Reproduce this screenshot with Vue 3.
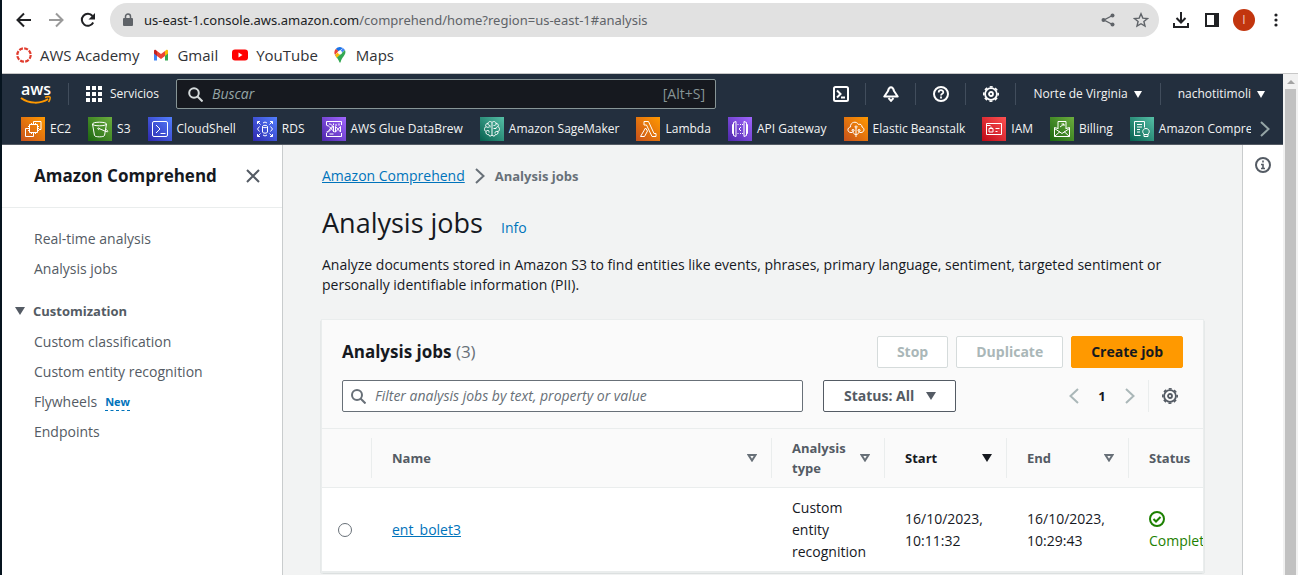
<script setup>
import { ref } from 'vue'

const services = [
  { name: 'EC2', tone: 'orange', d: 'M8.5 7.5h8v8h-8z M10.5 7.5V6M12.5 7.5V6M14.5 7.5V6M10.5 17v-1.5M12.5 17v-1.5M14.5 17v-1.5M8.5 9.5H7M8.5 11.5H7M8.5 13.5H7M18 9.5h-1.5M18 11.5h-1.5M18 13.5h-1.5 M12.5 6V4.5H20v8h-2 M7 11.5H4.5v8h8V17' },
  { name: 'S3', tone: 'green', d: 'M4.5 7c0-2.400 14-2.400 14 0s-14 2.400-14 0z M4.5 7l2 11.500c.5 1.800 9.500 1.800 10 0l2-11.500 M11 11.500l7 3c3 1 2-1-.5-2.500 M10.500 11a.7.7 0 1 0 .1 0' },
  { name: 'CloudShell', tone: 'blue', d: 'M6 4.5h12q1.5 0 1.5 1.5v12q0 1.5-1.5 1.5H6q-1.5 0-1.5-1.5V6q0-1.5 1.5-1.5z M8 8l4 4-4 4 M12.500 16.500h5' },
  { name: 'RDS', tone: 'blue', d: 'M9.500 9.500c0-1.600 5-1.600 5 0s-5 1.600-5 0v5.500c0 1.600 5 1.600 5 0V9.500 M6.500 9.500l-2 2.500 2 2.500 M17.500 9.500l2 2.500-2 2.500 M4.500 7V4.500H7M4.500 4.500l3 3 M17 4.500h2.500V7M19.500 4.500l-3 3 M4.500 17v2.500H7M4.500 19.500l3-3 M17 19.500h2.500V17M19.500 19.500l-3-3 M10 6l2-1 2 1M10 18l2 1 2-1' },
  { name: 'AWS Glue DataBrew', tone: 'purple', d: 'M4.5 8V4.5h15V8 M4.5 16v3.5h15V16 M4.5 8.500c3 0 3 2 5 3.500s2 3 4 3 M4.500 15c3 0 4-6 7-6v6 M7 7c3 0 4 2 3 4s-3 4-5 4 M14 7v2M17 6.500v2M11.500 6.500V8M7.500 17h4 M13.500 9.500l5 5.500v-5.500l-5 5.500z' },
  { name: 'Amazon SageMaker', tone: 'teal', d: 'M12 5.5c-2-2-4-.5-4 1-2 0-3 1.5-2 3-2 1.5-2 4 0 5-.5 2 1 3.500 2.500 3 .5 2 2.500 2 3.500.5V5.500c2-2 4-.5 4 1 2 0 3 1.500 2 3 2 1.500 2 4 0 5 .5 2-1 3.500-2.500 3-.5 2-2.500 2-3.500.5 M8 6.500c0 1.500 1 2 2 2v2 M6 9.500c1 1 2 1 3 .5 M6 14.500c1-1.500 3-1.500 3 0v1 M16 6.500c0 2-1 2-2.500 2 M18 9.500c-1 0-2 1-2 2h-2.500 M18 14.500c-2 0-3-.5-3 2' },
  { name: 'Lambda', tone: 'orange', d: 'M8 4.5h4.5l5.5 12h2v3h-4L10.500 8H8z M9.500 11l-5 8.500h4l3-5.500z' },
  { name: 'API Gateway', tone: 'purple', d: 'M8 4.5l-2.5 1v13l2.5 1z M5.500 7.500h-1v9h1 M16 4.500l2.500 1v13l-2.500 1z M18.500 7.500h1v9h-1 M13 10l-2 2 2 2 M9.500 7.500h1M12 7.500h1M14 7.500h1M9.500 16.500h1M12 16.500h1M14 16.500h1' },
  { name: 'Elastic Beanstalk', tone: 'orange', d: 'M8.5 15.5H7c-4 0-4-5-.5-5.500-.5-5 6-6.500 8-2.500 2-1 3.500.5 3.500 2.500 3 1 2.500 5.500-1 5.500h-1.500 M12 20v-9 M12 17.500c-2 0-3-1.500-3-3 M12 17.500c2 0 3-1.500 3-3 M9 12.500a1 1 0 1 0 .1 0 M15 12.500a1 1 0 1 0 .1 0 M12 9a1 1 0 1 0 .1 0' },
  { name: 'IAM', tone: 'red', d: 'M4.5 6.5h15v11h-15z M4.5 8.500h4 M7 11.500h4v3.500H7z M8 11.500c0-2 2-2 2 0 M13.500 11.500h4M13.500 14.500h2' },
  { name: 'Billing', tone: 'green', d: 'M8 12V4.5h8V12 M8 11.500l-3.500-1v9h15v-9l-3.500 1 M4.500 11.500l7.500 5 7.500-5 M4.500 19.500l5.500-5 M19.500 19.500L14 14.500 M10 10l4-3 M11.500 7H14v2' },
  { name: 'Amazon Comprehend', tone: 'teal', d: 'M10.5 18.5h-6v-14h10v6 M7 7.500h5M7 10h5M7 12.500h3M7 15h3 M14 17c-2.500-2-1-5.500 2-5.500s4.500 3.500 2 5.500v2.500h-4z M14 17.500h4' }
]

const customLinks = ['Custom classification', 'Custom entity recognition', 'Flywheels', 'Endpoints']
const columns = [
  { label: 'Name', key: 'name', sort: true },
  { label: 'Analysis type', key: 'type', sort: true },
  { label: 'Start', key: 'start', sort: true, active: true },
  { label: 'End', key: 'end', sort: true },
  { label: 'Status', key: 'status' }
]
const jobs = [
  { id: 'ent_bolet3', type: 'Custom entity recognition', start: '16/10/2023, 10:11:32', end: '16/10/2023, 10:29:43', status: 'Completed' }
]
const selected = ref('')
const filter = ref('')
</script>

<template>
  <div class="window">
    <div class="toolbar">
      <button class="plain" aria-label="Back"><svg width="16" height="16" viewBox="0 0 16 16" fill="none" stroke="#202124" stroke-width="2"><path d="M15 8H2M8 1.500L1.500 8 8 14.500" /></svg></button>
      <button class="plain" aria-label="Forward"><svg width="16" height="16" viewBox="0 0 16 16" fill="none" stroke="#9a9a9a" stroke-width="2"><path d="M1 8h13M8 1.500L14.500 8 8 14.500" /></svg></button>
      <button class="plain" aria-label="Reload"><svg width="16" height="16" viewBox="0 0 16 16"><path d="M13.200 10.500A6 6 0 1 1 12.500 4" fill="none" stroke="#202124" stroke-width="2" /><path d="M15 1v6.500H8.500z" fill="#202124" /></svg></button>
      <div class="address">
        <svg width="10" height="14" viewBox="0 0 10 14"><path d="M2.500 6V3.500a2.500 2.500 0 0 1 5 0V6" fill="none" stroke="#5f6368" stroke-width="1.500" /><rect y="5" width="10" height="8" rx="1" fill="#5f6368" /></svg>
        <span class="url"><span class="host">us-east-1.console.aws.amazon.com</span>/comprehend/home?region=us-east-1#analysis</span>
        <button class="plain" aria-label="Share"><svg width="14" height="14" viewBox="0 0 14 14"><path d="M11.500 2.500L3 7l8.500 4.500" fill="none" stroke="#5f6368" stroke-width="1.400" /><g fill="#5f6368"><circle cx="11.500" cy="2.400" r="2" /><circle cx="2.500" cy="7" r="2" /><circle cx="11.500" cy="11.600" r="2" /></g></svg></button>
        <button class="plain" aria-label="Bookmark"><svg width="16" height="16" viewBox="0 0 16 16"><path d="M8 1.800l1.800 4.300 4.700.4-3.600 3 1.100 4.600L8 11.700l-4 2.400 1.100-4.600-3.600-3 4.700-.4z" fill="none" stroke="#5f6368" stroke-width="1.400" /></svg></button>
      </div>
      <div class="actions">
        <button class="plain" aria-label="Downloads"><svg width="16" height="16" viewBox="0 0 16 16" fill="none" stroke="#202124" stroke-width="2"><path d="M8 0v10M3.500 6L8 10.500 12.500 6M1 11v4h14v-4" /></svg></button>
        <button class="plain" aria-label="Side panel"><svg width="14" height="14" viewBox="0 0 14 14"><path d="M0 0h14v14H0z" fill="#202124" /><path d="M2 2h7v10H2z" fill="#fff" /></svg></button>
        <button class="avatar">I</button>
        <button class="plain" aria-label="Menu"><svg width="4" height="14" viewBox="0 0 4 14" fill="#202124"><circle cx="2" cy="2" r="1.600" /><circle cx="2" cy="7" r="1.600" /><circle cx="2" cy="12" r="1.600" /></svg></button>
      </div>
    </div>

    <nav class="bookmarks">
      <a href="#"><svg width="16" height="16" viewBox="0 0 16 16"><circle cx="8" cy="8" r="6.700" fill="none" stroke="#e03c2e" stroke-width="2.200" stroke-dasharray="3.960 1.300" /></svg>AWS Academy</a>
      <a href="#"><svg width="16" height="16" viewBox="0 0 16 16"><path d="M1 5v8.500h3V7z" fill="#4285f4" /><path d="M15 5v8.500h-3V7z" fill="#34a853" /><path d="M12 4l1.500-1.200Q15 2.500 15 4v2.500L12 9z" fill="#fbbc04" /><path d="M4 4L2.500 2.800Q1 2.500 1 4v2.500L4 9z" fill="#c5221f" /><path d="M4 4l4 3 4-3v5l-4 3-4-3z" fill="#ea4335" /></svg>Gmail</a>
      <a href="#"><svg width="16" height="16" viewBox="0 0 16 16"><rect y="2.500" width="16" height="11" rx="3" fill="#f00" /><path d="M6.500 5.500v5l4-2.500z" fill="#fff" /></svg>YouTube</a>
      <a href="#"><svg width="16" height="16" viewBox="0 0 16 16"><path d="M8 0a5.500 5.500 0 0 0-4.300 2L6.500 4.500 11 1z" fill="#1a73e8" /><path d="M3.700 2A5.500 5.500 0 0 0 3 8l3.500-4z" fill="#ea4335" /><path d="M11 1L6.300 6.500 3 8l1.500 2.500L13 3z" fill="#4285f4" /><path d="M3 8l1.800 3L9.700 6 8 3.500z" fill="#fbbc04" /><path d="M13 3c2 5-3.500 6.500-4.500 12.500h-1C7 13.500 6 12 4.800 10.700z" fill="#34a853" /><circle cx="8" cy="5.500" r="2" fill="#fff" /></svg>Maps</a>
    </nav>

    <div class="viewport">
      <div class="page">
        <header class="console">
          <div class="console-top">
            <a class="logo" href="#" aria-label="AWS home"><svg width="32" height="36" viewBox="0 -6 32 36"><text x="1" y="13" fill="#fff" font-size="16" font-family="Open Sans, sans-serif" font-weight="600">aws</text><path d="M1 16c8 6 20 6 27 1" fill="none" stroke="#f90" stroke-width="2" /><path d="M25 15.500c2-1 4.500-1 5-.5s0 3-1.500 5" fill="none" stroke="#f90" stroke-width="1.500" /></svg></a>
            <i class="rule"></i>
            <button class="nav-button services-button"><svg width="16" height="16" viewBox="0 0 16 16" fill="#fff"><path d="M0 0h4v4H0zM6 0h4v4H6zM12 0h4v4h-4zM0 6h4v4H0zM6 6h4v4H6zM12 6h4v4h-4zM0 12h4v4H0zM6 12h4v4H6zM12 12h4v4h-4z" /></svg>Servicios</button>
            <label class="global-search">
              <svg width="15" height="15" viewBox="0 0 15 15" fill="none" stroke="#d5dbdb" stroke-width="2"><circle cx="6" cy="6" r="4.800" /><path d="M9.500 9.500l5 5" /></svg>
              <input type="text" placeholder="Buscar" aria-label="Buscar" />
              <span>[Alt+S]</span>
            </label>
            <div class="console-tools">
              <button class="tool" aria-label="CloudShell"><svg width="16" height="16" viewBox="0 0 16 16" fill="none" stroke="#fff" stroke-width="2"><rect x="1" y="1" width="14" height="14" rx="1.500" /><path d="M4 4.500L7.500 8 4 11.500M8 11.500h4" /></svg></button>
              <button class="tool" aria-label="Notifications"><svg width="16" height="16" viewBox="0 0 16 16" fill="none" stroke="#fff" stroke-width="2"><path d="M8 1.200c-2 0-2.500 1.500-3 3.800L1.300 10.500h13.400L11 5c-.5-2.300-1-3.800-3-3.800z" stroke-linejoin="round" /><path d="M5.500 12L8 14.800l2.500-2.800" /></svg></button>
              <button class="tool" aria-label="Help"><svg width="16" height="16" viewBox="0 0 16 16" fill="none" stroke="#fff" stroke-width="2"><circle cx="8" cy="8" r="7" /><path d="M5.700 6.500c0-3 4.600-3 4.600-.3C10.300 8 8 7.500 8 9.500M8 10.500v2" stroke-width="1.800" /></svg></button>
              <button class="tool" aria-label="Settings"><svg width="16" height="16" viewBox="0 0 16 16" fill="none" stroke="#fff"><circle cx="8" cy="8" r="5.900" stroke-width="1.800" /><circle cx="8" cy="8" r="7.200" stroke-width="1.600" stroke-dasharray="3.055 2.600" stroke-dashoffset="1.527" /><circle cx="8" cy="8" r="2" stroke-width="1.800" /></svg></button>
              <button class="nav-button menu">Norte de Virginia<svg width="8" height="7" viewBox="0 0 8 7" fill="#fff"><path d="M0 0h8L4 7z" /></svg></button>
              <button class="nav-button menu">nachotitimoli<svg width="8" height="7" viewBox="0 0 8 7" fill="#fff"><path d="M0 0h8L4 7z" /></svg></button>
            </div>
          </div>
          <div class="favorites">
            <div class="favorite-list">
              <a v-for="s in services" :key="s.name" href="#"><svg :class="s.tone" width="24" height="24" viewBox="0 0 24 24" fill="none" stroke="#fff"><path :d="s.d" /></svg>{{ s.name }}</a>
            </div>
            <button class="plain" aria-label="More services"><svg width="10" height="16" viewBox="0 0 10 16" fill="none" stroke="#95a5a6" stroke-width="2"><path d="M1 1l7.500 7L1 15" /></svg></button>
          </div>
        </header>

        <div class="body">
          <aside class="sidebar">
            <div class="side-title">
              <h2>Amazon Comprehend</h2>
              <button class="plain" aria-label="Close"><svg width="14" height="14" viewBox="0 0 14 14" stroke="#545b64" stroke-width="2"><path d="M1 1l12 12M13 1L1 13" /></svg></button>
            </div>
            <nav class="side-nav">
              <a href="#">Real-time analysis</a>
              <a href="#">Analysis jobs</a>
              <button class="group"><svg width="10" height="8" viewBox="0 0 10 8" fill="#545b64"><path d="M0 0h10L5 8z" /></svg>Customization</button>
              <a v-for="link in customLinks" :key="link" href="#">{{ link }}<span v-if="link === 'Flywheels'" class="new">New</span></a>
            </nav>
          </aside>

          <main class="main">
            <nav class="crumbs">
              <a href="#">Amazon Comprehend</a>
              <svg width="10" height="16" viewBox="0 0 10 16" fill="none" stroke="#687078" stroke-width="2"><path d="M1 1l7.500 7L1 15" /></svg>
              <span>Analysis jobs</span>
            </nav>
            <div class="heading"><h1>Analysis jobs</h1><a href="#">Info</a></div>
            <p>Analyze documents stored in Amazon S3 to find entities like events, phrases, primary language, sentiment, targeted sentiment or personally identifiable information (PII).</p>

            <section class="card">
              <div class="card-head">
                <h2>Analysis jobs <span>(3)</span></h2>
                <div class="buttons">
                  <button class="button" disabled>Stop</button>
                  <button class="button" disabled>Duplicate</button>
                  <button class="button primary">Create job</button>
                </div>
              </div>
              <div class="filters">
                <label class="filter">
                  <svg width="15" height="15" viewBox="0 0 15 15" fill="none" stroke="#687078" stroke-width="2"><circle cx="6" cy="6" r="5" /><path d="M9.500 9.500l5 5" /></svg>
                  <input v-model="filter" type="text" placeholder="Filter analysis jobs by text, property or value" aria-label="Filter analysis jobs" />
                </label>
                <label class="status-select">
                  <select aria-label="Status"><option>Status: All</option></select>
                  <svg width="10" height="8" viewBox="0 0 10 8" fill="#545b64"><path d="M0 0h10L5 8z" /></svg>
                </label>
                <div class="pager">
                  <button class="plain" aria-label="Previous page"><svg width="10" height="16" viewBox="0 0 10 16" fill="none" stroke="#aab7b8" stroke-width="2"><path d="M9 1L1.500 8 9 15" /></svg></button>
                  <button class="plain current">1</button>
                  <button class="plain" aria-label="Next page"><svg width="10" height="16" viewBox="0 0 10 16" fill="none" stroke="#aab7b8" stroke-width="2"><path d="M1 1l7.500 7L1 15" /></svg></button>
                </div>
                <button class="plain preferences" aria-label="Preferences"><svg width="16" height="16" viewBox="0 0 16 16" fill="none" stroke="#545b64"><circle cx="8" cy="8" r="5.900" stroke-width="1.800" /><circle cx="8" cy="8" r="7.200" stroke-width="1.600" stroke-dasharray="3.055 2.600" stroke-dashoffset="1.527" /><circle cx="8" cy="8" r="2" stroke-width="1.800" /></svg></button>
              </div>
              <div class="table-wrap">
                <table>
                  <colgroup><col class="c-pick" /><col class="c-name" /><col class="c-type" /><col class="c-date" /><col class="c-date" /><col class="c-status" /></colgroup>
                  <thead>
                    <tr>
                      <th><div class="cell"></div></th>
                      <th v-for="c in columns" :key="c.key">
                        <div class="cell" :class="{ active: c.active, last: !c.sort }">
                          <span>{{ c.label }}</span>
                          <svg v-if="c.sort" width="10" height="8" viewBox="0 0 10 8"><path v-if="c.active" d="M0 0h10L5 8z" fill="#16191f" /><path v-else d="M1.500 1h7L5 6.500z" fill="none" stroke="#687078" stroke-width="2" /></svg>
                        </div>
                      </th>
                    </tr>
                  </thead>
                  <tbody>
                    <tr v-for="j in jobs" :key="j.id">
                      <td class="pick"><input v-model="selected" type="radio" name="job" :value="j.id" :aria-label="j.id" /></td>
                      <td><a href="#">{{ j.id }}</a></td>
                      <td>{{ j.type }}</td>
                      <td>{{ j.start }}</td>
                      <td>{{ j.end }}</td>
                      <td class="done"><svg width="16" height="16" viewBox="0 0 16 16" fill="none" stroke="#1d8102" stroke-width="2"><circle cx="8" cy="8" r="7" /><path d="M4.500 8l2.500 2.500L11.500 6" /></svg><span>{{ j.status }}</span></td>
                    </tr>
                  </tbody>
                </table>
              </div>
            </section>
          </main>

          <aside class="tools-panel">
            <button class="plain" aria-label="Info"><svg width="16" height="16" viewBox="0 0 16 16" fill="none" stroke="#545b64" stroke-width="2"><circle cx="8" cy="8" r="7" /><path d="M8 3.500v2M6 7.500h2v4M6 11.500h4" stroke-width="1.600" /></svg></button>
          </aside>
        </div>
      </div>
      <div class="scrollbar"><svg width="8" height="4" viewBox="0 0 8 4"><path d="M0 4l4-4 4 4z" fill="#a3a3a3" /></svg><i></i></div>
    </div>
  </div>
</template>

<style>
body { overflow: hidden; }
</style>

<style scoped>
* { box-sizing: border-box; }
.window { height: 100vh; display: flex; flex-direction: column; overflow: hidden; border-left: 2px solid #06141f; background: #fff; color: #16191f; font: 14px/20px "Open Sans", "Noto Sans", sans-serif; }
svg { display: block; flex: none; }
a { color: inherit; text-decoration: none; }
h1, h2, p { margin: 0; }
button, input, select { font: inherit; color: inherit; }
button { cursor: pointer; }
.plain { border: 0; padding: 0; background: none; display: flex; align-items: center; justify-content: center; }

.toolbar { height: 40px; flex: none; display: flex; align-items: center; gap: 16px; padding: 0 15px 0 14px; }
.address { flex: 1; height: 34px; display: flex; align-items: center; gap: 11px; padding: 0 10px 0 13px; margin: 0 -2px; border-radius: 17px; background: #e1e1e1; color: #5f6368; font-family: "Noto Sans", sans-serif; font-size: 13px; }
.url { flex: 1; }
.host { color: #202124; }
.address .plain + .plain { margin-left: 7px; }
.actions { display: flex; align-items: center; gap: 16px; }
.avatar { width: 22px; height: 22px; padding: 0; border: 0; border-radius: 50%; background: #c2350e; color: #f1cfc4; font-size: 12px; line-height: 22px; margin: 0 -2px; }
.actions .plain:last-child { width: 14px; }
.bookmarks { height: 34px; flex: none; display: flex; align-items: center; gap: 14px; padding: 0 14px 4px; border-bottom: 1px solid #c8c8c8; font-size: 15px; color: #303236; }
.bookmarks a { display: flex; align-items: center; gap: 8px; }

.viewport { flex: 1; min-height: 0; display: flex; }
.page { flex: 1; min-width: 0; display: flex; flex-direction: column; }
.scrollbar { width: 15px; flex: none; display: flex; flex-direction: column; align-items: center; gap: 5px; padding-top: 6px; background: #f1f1f1; }
.scrollbar i { flex: 1; width: 11px; background: #c1c1c1; }

.console { flex: none; background: #232f3e; border-bottom: 1px solid #545b64; color: #f2f3f3; font-size: 12px; }
.console-top { height: 40px; display: flex; align-items: center; }
.logo { margin-left: 18px; width: 32px; }
.rule { width: 1px; height: 22px; margin: 0 17px 0 16px; background: #414d5c; }
.nav-button { border: 0; padding: 0; background: none; display: flex; align-items: center; gap: 8px; white-space: nowrap; }
.services-button { width: 74px; margin-right: 16px; }
.global-search { flex: 0 1 540px; height: 30px; display: flex; align-items: center; gap: 9px; padding: 0 10px 0 11px; border: 1px solid #879596; border-radius: 2px; background: #16191f; color: #879596; font-size: 14px; }
.global-search input { flex: 1; min-width: 0; border: 0; padding: 0; outline: 0; background: none; color: #fff; }
.global-search input::placeholder { color: #95a5a6; font-style: italic; opacity: 1; }
.console-tools { margin-left: auto; display: flex; align-items: center; }
.tool { width: 50px; height: 22px; padding: 0; border: 0; border-right: 1px solid #414d5c; background: none; display: flex; align-items: center; justify-content: center; }
.menu { height: 22px; gap: 6px; padding: 0 18px 0 17px; }
.menu + .menu { border-left: 1px solid #414d5c; }
.favorites { height: 30px; display: flex; align-items: center; padding: 0 13px 0 19px; gap: 9px; }
.favorite-list { flex: 1; min-width: 0; display: flex; gap: 17px; overflow: hidden; }
.favorite-list a { flex: none; display: flex; align-items: center; gap: 5px; line-height: 24px; }
.orange { background: linear-gradient(45deg, #c8511b, #f90); }
.green { background: linear-gradient(45deg, #1b660f, #6cae3e); }
.blue { background: linear-gradient(45deg, #2e27ad, #527fff); }
.purple { background: linear-gradient(45deg, #4d27aa, #a166ff); }
.teal { background: linear-gradient(45deg, #055f4e, #56c0a7); }
.red { background: linear-gradient(45deg, #bd0816, #ff5252); }

.body { flex: 1; min-height: 0; display: flex; }
.sidebar { width: 281px; flex: none; border-right: 1px solid #c9cccd; color: #545b64; }
.side-title { height: 63px; display: flex; align-items: center; justify-content: space-between; padding: 0 22px 0 32px; border-bottom: 1px solid #eaeded; color: #16191f; }
h2 { font-size: 17px; line-height: 22px; }
.side-nav { display: flex; flex-direction: column; padding: 16px 12px 0 32px; }
.side-nav a { display: flex; align-items: center; gap: 8px; height: 30px; }
.group { display: flex; align-items: center; gap: 8px; height: 30px; margin: 12px 0 1px -19px; padding: 0; border: 0; background: none; font-size: 13px; font-weight: 700; }
.new { color: #0073bb; font-size: 11px; line-height: 16px; font-weight: 700; border-bottom: 1px dashed #0073bb; }
.main { flex: 1; min-width: 0; padding: 21px 39px 0; background: #f2f3f3; }
.crumbs { display: flex; align-items: center; gap: 10px; color: #687078; font-size: 13px; font-weight: 700; }
.crumbs a { color: #0073bb; text-decoration: underline; font-size: 14px; font-weight: 400; }
.heading { display: flex; align-items: baseline; gap: 18px; margin-top: 19px; }
h1 { font-size: 27px; line-height: 36px; font-weight: 400; }
.heading a { color: #0073bb; }
.main p { margin-top: 14px; }
.card { margin-top: 25px; background: #fff; box-shadow: 0 0 0 1px #eaeded, 1px 1px 1px 0 #aab7b8, -1px 1px 1px 0 #aab7b8; }
.card-head { display: flex; align-items: center; justify-content: space-between; padding: 16px 20px 6px; background: #fafafa; }
.card-head h2 span { font-weight: 400; color: #687078; }
.buttons { display: flex; gap: 8px; }
.button { height: 32px; padding: 0 19px; border: 1px solid #d5dbdb; border-radius: 2px; background: #fff; color: #aab7b8; font-weight: 700; }
.primary { border-color: #f90; background: #f90; color: #16191f; }
.filters { display: flex; align-items: center; padding: 6px 20px 16px; background: #fafafa; }
.filter { flex: 1; max-width: 461px; height: 32px; display: flex; align-items: center; gap: 9px; padding: 0 8px; margin-right: 20px; border: 1px solid #687078; border-radius: 2px; background: #fff; }
.filter input { flex: 1; min-width: 0; border: 0; padding: 0; outline: 0; background: none; }
.filter input::placeholder { color: #687078; font-style: italic; opacity: 1; }
.status-select { position: relative; }
.status-select select { display: block; appearance: none; width: 133px; height: 32px; padding: 0 20px; border: 1px solid #545b64; border-radius: 2px; background: #fff; color: #545b64; font-weight: 700; }
.status-select svg { position: absolute; right: 20px; top: 12px; pointer-events: none; }
.pager { display: flex; align-items: center; gap: 16px; margin-left: auto; }
.current { width: 14px; font-size: 13px; font-weight: 700; }
.preferences { height: 32px; margin-left: 13px; padding: 0 5px 0 13px; border-left: 1px solid #eaeded; }
.table-wrap { overflow: hidden; }
table { table-layout: fixed; width: 967px; border-collapse: collapse; }
.c-pick { width: 50px; }
.c-name { width: 400px; }
.c-type { width: 113px; }
.c-date { width: 122px; }
.c-status { width: 160px; }
th { height: 59px; padding: 0; border-top: 1px solid #eaeded; border-bottom: 1px solid #eaeded; background: #fafafa; color: #545b64; font-size: 13px; text-align: left; }
.cell { height: 40px; display: flex; align-items: center; justify-content: space-between; padding: 0 14px 0 20px; border-right: 1px solid #eaeded; }
.cell.active { color: #16191f; }
.cell.last { border: 0; }
td { height: 84px; padding: 8px 16px 8px 20px; border-bottom: 1px solid #eaeded; line-height: 22px; }
td a { color: #0073bb; text-decoration: underline; }
.pick { padding: 0 0 0 16px; }
.pick input { display: block; appearance: none; width: 14px; height: 14px; margin: 0; border: 1px solid #687078; border-radius: 50%; background: #fff; }
.pick input:checked { border: 4px solid #0073bb; }
.done { color: #1d8102; }
.done svg { margin: 3px 0; }
.tools-panel { width: 41px; flex: none; display: flex; justify-content: center; align-items: flex-start; padding-top: 12px; border-left: 1px solid #c9cccd; background: #fff; }
</style>
